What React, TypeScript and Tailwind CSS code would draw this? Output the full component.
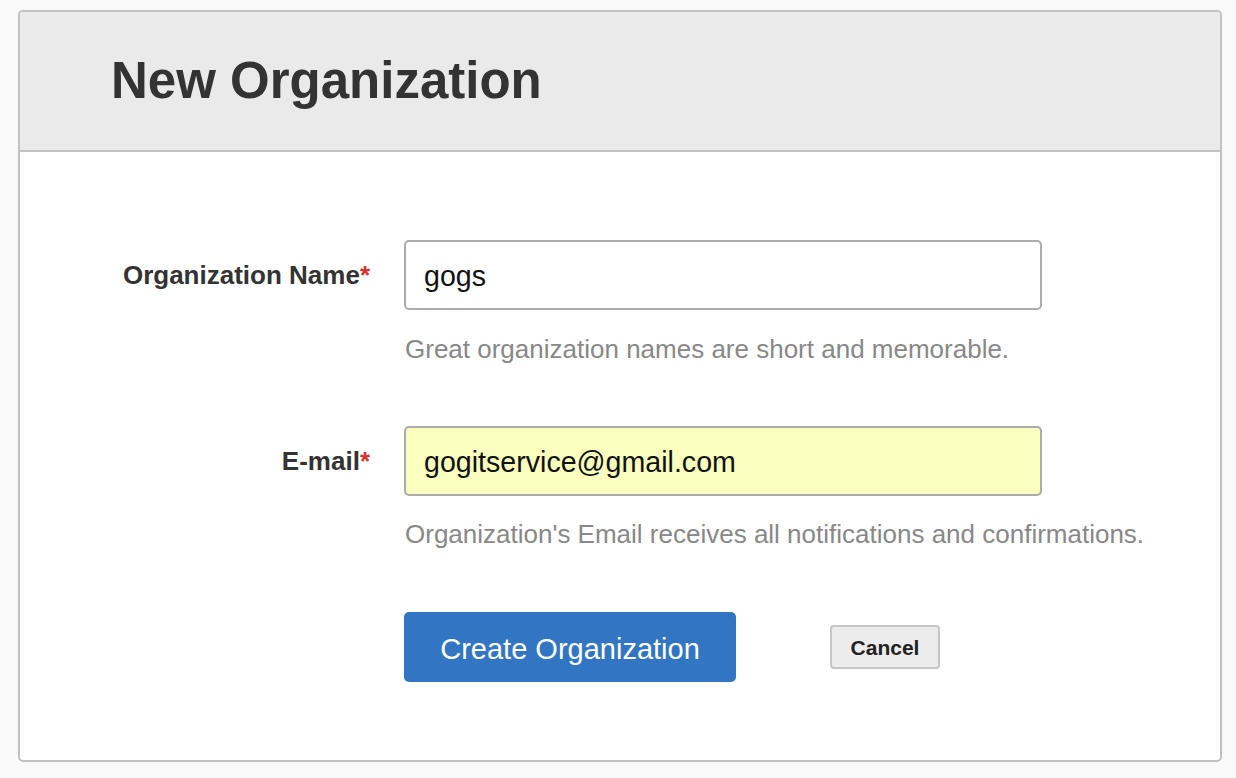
import { useState } from "react";

export default function App() {
  const [name, setName] = useState("gogs");
  const [email, setEmail] = useState("gogitservice@gmail.com");

  return (
    <div className="min-h-[778px] bg-[#f9f9f9] pl-[18px] pt-[10px] font-['Liberation_Sans',Arial,sans-serif]">
      <div className="w-[1204px] h-[752px] border-2 border-[#c2c2c2] rounded-[5px] bg-white overflow-hidden flex flex-col">
        {/* Header */}
        <div className="h-[140px] shrink-0 bg-[#eaeaea] border-b-2 border-[#c2c2c2] flex items-center pl-[91px] pb-[2px]">
          <h1 className="text-[51px] font-bold text-[#333] leading-none">New Organization</h1>
        </div>

        {/* Form */}
        <form className="pt-[88px]" onSubmit={(e) => e.preventDefault()}>
          <div className="flex items-center">
            <label className="w-[350px] text-right text-[26px] font-bold text-[#333]">
              Organization Name<span className="text-[#d9302c]">*</span>
            </label>
            <input
              value={name}
              onChange={(e) => setName(e.target.value)}
              className="ml-[34px] w-[638px] h-[70px] border-2 border-[#acacac] rounded-[5px] pl-[18px] pt-[3px] text-[28.6px] text-[#111] bg-white outline-none"
            />
          </div>
          <p className="pl-[385px] mt-[24px] text-[26px] leading-[31px] text-[#888]">
            Great organization names are short and memorable.
          </p>

          <div className="flex items-center mt-[61px]">
            <label className="w-[350px] text-right text-[26px] font-bold text-[#333]">
              E-mail<span className="text-[#d9302c]">*</span>
            </label>
            <input
              value={email}
              onChange={(e) => setEmail(e.target.value)}
              className="ml-[34px] w-[638px] h-[70px] border-2 border-[#acacac] rounded-[5px] pl-[18px] pt-[3px] text-[28.6px] text-[#111] bg-[#faffbd] outline-none"
            />
          </div>
          <p className="pl-[385px] mt-[23px] text-[26px] leading-[31px] text-[#888]">
            Organization's Email receives all notifications and confirmations.
          </p>

          <div className="flex items-center mt-[62px] pl-[384px]">
            <button
              type="submit"
              className="w-[332px] h-[70px] bg-[#3276c3] rounded-[5px] text-white text-[29px] pt-[5px]"
            >
              Create Organization
            </button>
            <button
              type="button"
              className="ml-[94px] w-[110px] h-[44px] bg-[#ececec] border-2 border-[#c6c6c6] rounded-[4px] text-[21px] font-bold text-[#222] pt-[2px]"
            >
              Cancel
            </button>
          </div>
        </form>
      </div>
    </div>
  );
}
